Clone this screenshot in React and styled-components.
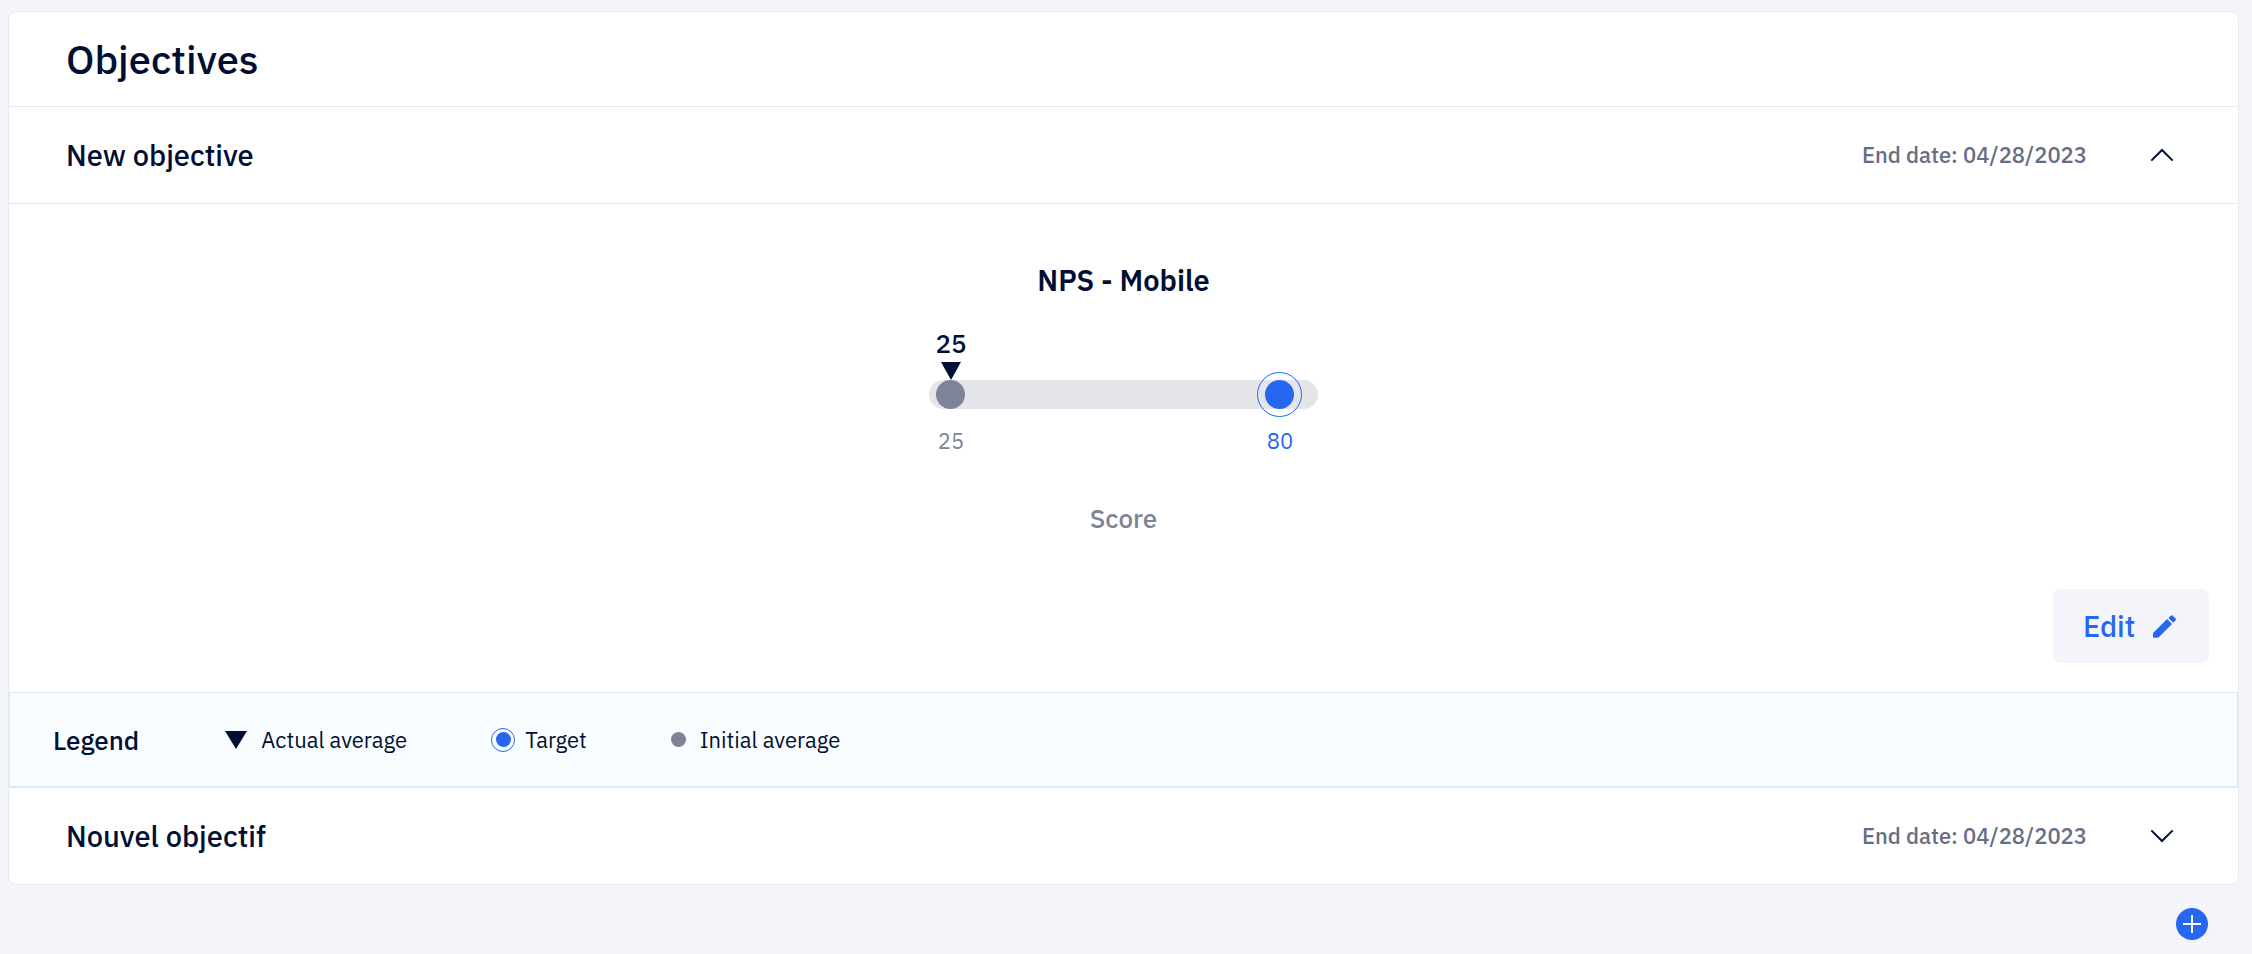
import React, { useState } from 'react';
import styled, { createGlobalStyle, ThemeProvider } from 'styled-components';

const theme = {
  ink: '#000f33',
  grey: '#7e8398',
  date: '#676d83',
  blue: '#2666f0',
  page: '#f4f5fa',
  line: '#e6e8f0',
  track: '#e4e5e9',
};

const GlobalStyle = createGlobalStyle`
  *, *::before, *::after { box-sizing: border-box; }
  body {
    margin: 0;
    background: ${theme.page};
    color: ${theme.ink};
    font-family: "IBM Plex Sans", Roboto, "Liberation Sans", sans-serif;
    font-weight: 500;
  }
  h1, h2, h3, p, ul { margin: 0; padding: 0; font-weight: 500; }
  button { font: inherit; color: inherit; border: 0; padding: 0; cursor: pointer; }
`;

const Page = styled.main`
  padding: 11px 13px 0 8px;
`;

const Card = styled.section`
  background: #fff;
  border: 1px solid ${({ theme }) => theme.line};
  border-radius: 8px;
  overflow: hidden;
`;

const CardHeader = styled.header`
  display: flex;
  align-items: center;
  height: 94px;
  padding: 0 57px;
`;

const Title = styled.h1`
  font-size: 40px;
  line-height: 52px;
`;

const Row = styled.div`
  display: flex;
  align-items: center;
  height: 97px;
  padding: 0 57px;
  border-top: 1px solid ${({ theme }) => theme.line};
`;

const RowTitle = styled.h2`
  flex: 1;
  font-size: 29px;
  line-height: 38px;
`;

const EndDate = styled.p`
  font-size: 22px;
  line-height: 28px;
  color: ${({ theme }) => theme.date};
`;

const ToggleButton = styled.button`
  display: flex;
  justify-content: center;
  width: 38px;
  margin-left: 56px;
  background: none;
`;

const Details = styled.div`
  display: flex;
  flex-direction: column;
  align-items: center;
  padding-top: 57px;
  border-top: 1px solid ${({ theme }) => theme.line};
`;

const ScoreTitle = styled.h3`
  font-size: 29px;
  line-height: 38px;
  font-weight: 600;
`;

const Gauge = styled.div`
  width: 389px;
  margin-top: 30px;
`;

const Marks = styled.div`
  display: flex;
  justify-content: space-between;
  padding-right: 16px;
`;

const Mark = styled.div`
  display: flex;
  flex-direction: column;
  align-items: center;
  gap: 5px;
  width: 44px;
  font-size: ${({ $strong }) => ($strong ? 26 : 22)}px;
  line-height: 28px;
  font-weight: ${({ $strong }) => ($strong ? 500 : 400)};
  color: ${({ theme, $tone }) => theme[$tone]};
`;

const Track = styled.div`
  display: flex;
  align-items: center;
  justify-content: space-between;
  height: 29px;
  padding: 0 16px 0 7px;
  border-radius: 15px;
  background: ${({ theme }) => theme.track};
`;

const Dot = styled.span`
  flex: none;
  width: ${({ $size }) => $size}px;
  height: ${({ $size }) => $size}px;
  border-radius: 50%;
  background: ${({ theme, $tone }) => theme[$tone]};
`;

const Ring = styled.span`
  flex: none;
  display: flex;
  align-items: center;
  justify-content: center;
  width: ${({ $size }) => $size}px;
  height: ${({ $size }) => $size}px;
  border: 1px solid ${({ theme }) => theme.blue};
  border-radius: 50%;
`;

const Values = styled(Marks)`
  margin-top: 18px;
`;

const Unit = styled.p`
  margin-top: 46px;
  font-size: 26px;
  line-height: 34px;
  color: ${({ theme }) => theme.grey};
`;

const Actions = styled.div`
  display: flex;
  justify-content: flex-end;
  width: 100%;
  padding: 54px 29px 29px;
`;

const EditButton = styled.button`
  display: flex;
  align-items: center;
  justify-content: space-between;
  width: 156px;
  height: 74px;
  && { padding: 0 33px 0 30px; }
  border-radius: 8px;
  background: ${({ theme }) => theme.page};
  && { color: ${({ theme }) => theme.blue}; }
  font-size: 29px;
  line-height: 38px;
`;

const Legend = styled.div`
  display: flex;
  align-items: center;
  height: 95px;
  padding: 0 43px;
  border: 1px solid #d3ebfa;
  background: #f9fdff;
`;

const LegendTitle = styled.h3`
  font-size: 26px;
  line-height: 34px;
`;

const LegendList = styled.ul`
  display: flex;
  align-items: center;
  gap: 84px;
  margin-left: 86px;
  list-style: none;
`;

const LegendItem = styled.li`
  display: flex;
  align-items: center;
  gap: ${({ $gap }) => $gap}px;
  font-size: 22px;
  line-height: 28px;
  font-weight: 400;
`;

const Footer = styled.footer`
  display: flex;
  justify-content: flex-end;
  padding: 23px 31px 0;
`;

const AddButton = styled.button`
  display: flex;
  align-items: center;
  justify-content: center;
  width: 32px;
  height: 32px;
  border-radius: 50%;
  background: ${({ theme }) => theme.blue};
`;

const Triangle = ({ width = 20, height = 18 }) => (
  <svg width={width} height={height} viewBox="0 0 20 18" preserveAspectRatio="none" aria-hidden="true">
    <path d="M0 0H20L10 18Z" fill={theme.ink} />
  </svg>
);

const Chevron = ({ up }) => (
  <svg width="24" height="14" viewBox="0 0 24 14" fill="none" stroke={theme.ink} strokeWidth="2" aria-hidden="true">
    <path d={up ? 'M1.3 12.6L12 2L22.7 12.6' : 'M1.3 1.4L12 12L22.7 1.4'} />
  </svg>
);

const Pencil = () => (
  <svg width="23" height="23" viewBox="0 0 22 22" fill={theme.blue} aria-hidden="true">
    <path d="M13.5 3.9L18.2 8.5L6 20.8Q5 21.8 3.5 21.8H.9Q0 21.8 0 20.9V18.4Q0 17.3 .8 16.5Z" />
    <path d="M14.8 2.8L17 .6Q17.9 -.2 18.8 .7L21.6 3.4Q22.4 4.3 21.6 5.1L19.4 7.4Z" />
  </svg>
);

const Plus = () => (
  <svg width="18" height="18" viewBox="0 0 18 18" fill="none" stroke="#fff" strokeWidth="2" aria-hidden="true">
    <path d="M9 0V18M0 9H18" />
  </svg>
);

function ObjectiveDetails() {
  return (
    <>
      <Details>
        <ScoreTitle>NPS - Mobile</ScoreTitle>
        <Gauge>
          <Marks>
            <Mark $tone="ink" $strong>25<Triangle /></Mark>
          </Marks>
          <Track>
            <Dot $size={29} $tone="grey" />
            <Ring $size={45}><Dot $size={29} $tone="blue" /></Ring>
          </Track>
          <Values>
            <Mark $tone="grey">25</Mark>
            <Mark $tone="blue">80</Mark>
          </Values>
        </Gauge>
        <Unit>Score</Unit>
        <Actions>
          <EditButton type="button">Edit<Pencil /></EditButton>
        </Actions>
      </Details>
      <Legend>
        <LegendTitle>Legend</LegendTitle>
        <LegendList>
          <LegendItem $gap={14}><Triangle width={22} />Actual average</LegendItem>
          <LegendItem $gap={10}><Ring $size={24}><Dot $size={15} $tone="blue" /></Ring>Target</LegendItem>
          <LegendItem $gap={14}><Dot $size={15} $tone="grey" />Initial average</LegendItem>
        </LegendList>
      </Legend>
    </>
  );
}

function Objective({ name, endDate, initiallyOpen = false }) {
  const [open, setOpen] = useState(initiallyOpen);
  return (
    <article>
      <Row>
        <RowTitle>{name}</RowTitle>
        <EndDate>End date: {endDate}</EndDate>
        <ToggleButton
          type="button"
          aria-expanded={open}
          aria-label={name}
          onClick={() => setOpen(!open)}
        >
          <Chevron up={open} />
        </ToggleButton>
      </Row>
      {open && <ObjectiveDetails />}
    </article>
  );
}

export default function App() {
  return (
    <ThemeProvider theme={theme}>
      <GlobalStyle />
      <Page>
        <Card>
          <CardHeader><Title>Objectives</Title></CardHeader>
          <Objective name="New objective" endDate="04/28/2023" initiallyOpen />
          <Objective name="Nouvel objectif" endDate="04/28/2023" />
        </Card>
        <Footer>
          <AddButton type="button" aria-label="Add objective"><Plus /></AddButton>
        </Footer>
      </Page>
    </ThemeProvider>
  );
}
